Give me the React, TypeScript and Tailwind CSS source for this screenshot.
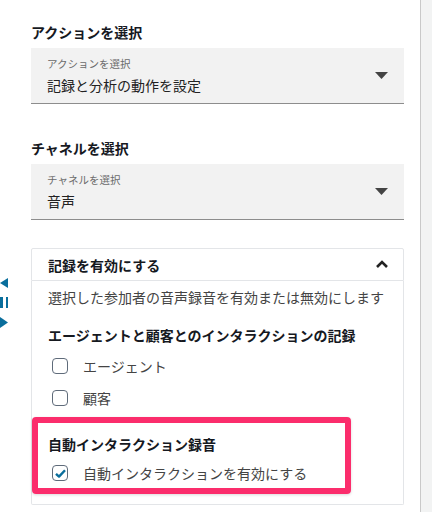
const font = { fontFamily: '"Noto Sans CJK JP", "Noto Sans", sans-serif' }

function Caret() {
  return (
    <svg width="13" height="7" viewBox="0 0 13 7" className="shrink-0">
      <path d="M0 0 L13 0 L6.5 7 Z" fill="#444" />
    </svg>
  )
}

function SelectField({ title, label, value }: { title: string; label: string; value: string }) {
  return (
    <div>
      <div className="text-[14px] leading-[20px] font-bold text-[#16191f]">{title}</div>
      <div className="mt-[6px] h-[56px] bg-[#f2f2f2] border-b border-[#8d8d8d] pl-[16px] pr-[16px] flex items-center">
        <div className="flex-1 pt-[1px]">
          <div className="text-[10.5px] leading-[14px] text-[#6b6b6b]">{label}</div>
          <div className="mt-[4px] text-[14px] leading-[20px] text-[#222]">{value}</div>
        </div>
        <Caret />
      </div>
    </div>
  )
}

function Checkbox({ checked }: { checked?: boolean }) {
  return (
    <div className="ml-[4px] w-[16px] h-[16px] rounded-[4px] border-[1.5px] border-[#5f6b7a] bg-white flex items-center justify-center shrink-0">
      {checked && (
        <svg width="11" height="9" viewBox="0 0 11 9">
          <path d="M1 4.8 L4 7.6 L10 1.2" fill="none" stroke="#0a6e9c" strokeWidth="2.4" strokeLinejoin="round" />
        </svg>
      )}
    </div>
  )
}

function CheckRow({ label, checked }: { label: string; checked?: boolean }) {
  return (
    <div className="h-[24px] flex items-center gap-[15px]">
      <Checkbox checked={checked} />
      <span className="text-[14px] leading-[20px] text-[#444]">{label}</span>
    </div>
  )
}

export default function App() {
  return (
    <div className="w-[432px] h-[512px] flex bg-white overflow-hidden" style={font}>
      <div className="relative w-[421px] border-r border-[#c9c9c9] pt-[22px]">
        {/* collapsed side handle */}
        <div className="absolute left-0 top-[278px] flex flex-col gap-[9px] text-[#0a6e9c]">
          <svg width="8" height="10" viewBox="0 0 8 10">
            <path d="M8 0 L8 10 L0 5 Z" fill="#0a6e9c" />
          </svg>
          <div className="flex gap-[3px] h-[11px]">
            <div className="w-[2.5px] bg-[#0a6e9c]" />
            <div className="w-[2.5px] bg-[#0a6e9c]" />
          </div>
          <svg width="8" height="11" viewBox="0 0 8 11">
            <path d="M0 0 L8 5.5 L0 11 Z" fill="#0a6e9c" />
          </svg>
        </div>

        <div className="ml-[31px] w-[373px]">
          <SelectField title="アクションを選択" label="アクションを選択" value="記録と分析の動作を設定" />
          <div className="mt-[34px]">
            <SelectField title="チャネルを選択" label="チャネルを選択" value="音声" />
          </div>

          <div className="mt-[28px]">
            <div className="h-[33px] border border-[#e3e5e8] rounded-t-[2px] pl-[16px] pr-[14px] flex items-center justify-between">
              <span className="text-[14px] leading-[20px] font-bold text-[#16191f]">記録を有効にする</span>
              <svg width="14" height="9" viewBox="0 0 14 9">
                <path d="M2 7 L7 2 L12 7" fill="none" stroke="#222" strokeWidth="2.6" />
              </svg>
            </div>
            <div className="border border-t-0 border-[#e3e5e8] rounded-b-[2px] px-[16px] pt-[6px] pb-[19px]">
              <div className="text-[14px] leading-[20px] text-[#444]">選択した参加者の音声録音を有効または無効にします</div>
              <div className="mt-[18px] text-[14px] leading-[20px] font-bold text-[#16191f]">
                エージェントと顧客とのインタラクションの記録
              </div>
              <div className="mt-[9px]">
                <CheckRow label="エージェント" />
              </div>
              <div className="mt-[8px]">
                <CheckRow label="顧客" />
              </div>
              <div className="relative mt-[24px]">
                <div className="absolute -left-[16px] -top-[17px] w-[319px] h-[77px] border-[6px] border-[#fb2d6c] rounded-[4px] shadow-[0_1px_3px_rgba(0,0,0,0.15)]" />
                <div className="text-[14px] leading-[20px] font-bold text-[#16191f]">自動インタラクション録音</div>
                <div className="mt-[7px]">
                  <CheckRow label="自動インタラクションを有効にする" checked />
                </div>
              </div>
            </div>
          </div>
        </div>
      </div>
      <div className="flex-1 bg-[#f2f3f3]" />
    </div>
  )
}
